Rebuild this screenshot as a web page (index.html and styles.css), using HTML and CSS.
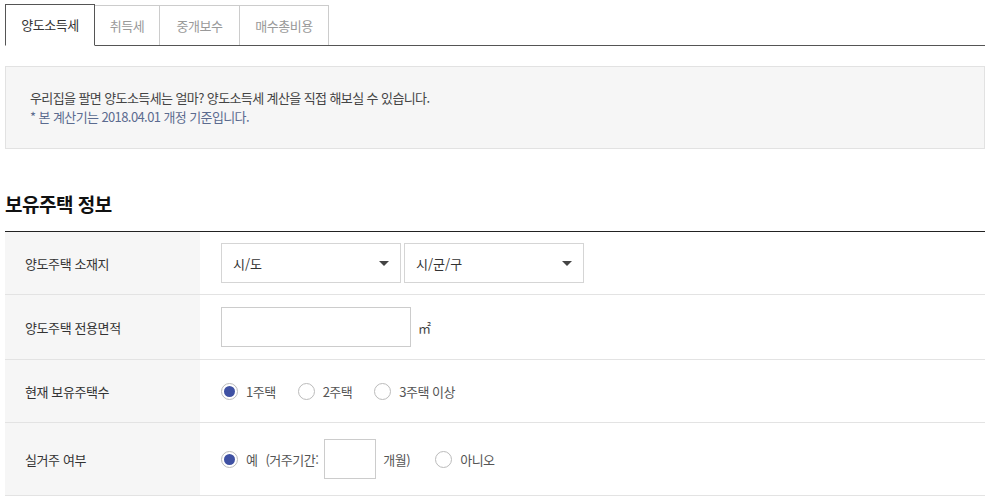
FILE: index.html
```html
<!DOCTYPE html>
<html lang="ko">
<head>
  <meta charset="UTF-8">
  <title>양도소득세 계산기</title>
  <link rel="stylesheet" href="styles.css">
</head>
<body>

<div class="wrap">
  <ul class="tabs">
    <li class="tab active">양도소득세</li>
    <li class="tab">취득세</li>
    <li class="tab">중개보수</li>
    <li class="tab">매수총비용</li>
  </ul>

  <div class="notice">
    <p>우리집을 팔면 양도소득세는 얼마? 양도소득세 계산을 직접 해보실 수 있습니다.</p>
    <p class="sub">* 본 계산기는 2018.04.01 개정 기준입니다.</p>
  </div>

  <h3 class="title">보유주택 정보</h3>

  <div class="table">
    <div class="row r1">
      <div class="th">양도주택 소재지</div>
      <div class="td">
        <div class="select">시/도<span class="arrow"></span></div>
        <div class="select">시/군/구<span class="arrow"></span></div>
      </div>
    </div>
    <div class="row r2">
      <div class="th">양도주택 전용면적</div>
      <div class="td">
        <div class="input wide"></div>
        <span class="unit">㎡</span>
      </div>
    </div>
    <div class="row r3">
      <div class="th">현재 보유주택수</div>
      <div class="td">
        <label class="radio on"><span class="dot"></span>1주택</label>
        <label class="radio"><span class="dot"></span>2주택</label>
        <label class="radio"><span class="dot"></span>3주택 이상</label>
      </div>
    </div>
    <div class="row r4">
      <div class="th">실거주 여부</div>
      <div class="td">
        <label class="radio on"><span class="dot"></span>예</label>
        <span class="paren">(거주기간:</span>
        <div class="input small"></div>
        <span class="month">개월)</span>
        <label class="radio"><span class="dot"></span>아니오</label>
      </div>
    </div>
  </div>
</div>

</body>
</html>
```

FILE: styles.css
```css
body {
  margin: 0;
  font-family: "Noto Sans CJK KR", "Noto Sans", sans-serif;
  color: #333;
  background: #fff;
}

.wrap {
  width: 980px;
  margin-left: 5px;
  padding-top: 4px;
}

.tabs {
  list-style: none;
  margin: 0;
  padding: 0;
  display: flex;
  border-bottom: 1px solid #555;
  height: 41px;
}

.tab {
  height: 40px;
  line-height: 40px;
  text-align: center;
  font-size: 13px;
  color: #999;
  border: 1px solid #ccc;
  border-left: none;
  border-bottom: none;
  margin-top: 1px;
  box-sizing: border-box;
  letter-spacing: -0.5px;
}

.tab:nth-child(2) { width: 65px; }
.tab:nth-child(3) { width: 80px; }
.tab:nth-child(4) { width: 89px; }

.tab.active {
  width: 90px;
  color: #333;
  border: 1px solid #555;
  border-bottom: 1px solid #fff;
  height: 42px;
  margin-top: 0;
  background: #fff;
}

.notice {
  margin-top: 20px;
  height: 83px;
  box-sizing: border-box;
  background: #f6f6f6;
  border: 1px solid #e2e2e2;
  padding: 21px 24px;
  font-size: 13px;
  letter-spacing: -0.6px;
}

.notice p {
  margin: 0;
  line-height: 19px;
  color: #444;
}

.notice .sub {
  color: #5b6b8f;
}

.title {
  margin: 40px 0 0;
  font-size: 19px;
  font-weight: bold;
  color: #111;
  letter-spacing: -0.5px;
  line-height: 30px;
  height: 42px;
}

.table {
  border-top: 1px solid #222;
}

.row {
  display: flex;
  border-bottom: 1px solid #e3e3e3;
}

.r1 { height: 62px; }
.r2 { height: 64px; }
.r3 { height: 62px; }
.r4 { height: 72px; }

.th {
  width: 195px;
  flex-shrink: 0;
  background: #f6f6f6;
  padding-left: 20px;
  box-sizing: border-box;
  display: flex;
  align-items: center;
  font-size: 13px;
  color: #333;
  letter-spacing: -0.4px;
}

.td {
  flex: 1;
  display: flex;
  align-items: center;
  padding-left: 21px;
  font-size: 13px;
  color: #555;
}

.select {
  width: 180px;
  height: 40px;
  box-sizing: border-box;
  border: 1px solid #d5d5d5;
  margin-right: 3px;
  display: flex;
  align-items: center;
  justify-content: space-between;
  padding: 0 11px;
  color: #333;
  font-size: 13px;
}

.arrow {
  width: 0;
  height: 0;
  border-left: 5px solid transparent;
  border-right: 5px solid transparent;
  border-top: 5px solid #444;
}

.input {
  height: 40px;
  box-sizing: border-box;
  border: 1px solid #ccc;
  background: #fff;
}

.input.wide { width: 190px; }
.input.small { width: 52px; margin: 0 7px 0 6px; }

.unit {
  margin-left: 7px;
  color: #444;
}

.radio {
  display: flex;
  align-items: center;
  margin-right: 22px;
  color: #555;
  letter-spacing: -0.5px;
}

.dot {
  width: 17px;
  height: 17px;
  border: 1px solid #bbb;
  border-radius: 50%;
  box-sizing: border-box;
  margin-right: 8px;
  display: flex;
  align-items: center;
  justify-content: center;
  background: #fff;
}

.radio.on .dot::after {
  content: "";
  width: 11px;
  height: 11px;
  border-radius: 50%;
  background: #3f51a3;
}

.r4 .radio.on { margin-right: 8px; }

.paren { color: #555; letter-spacing: -0.5px; }

.month { margin-right: 25px; color: #555; letter-spacing: -0.5px; }
```
